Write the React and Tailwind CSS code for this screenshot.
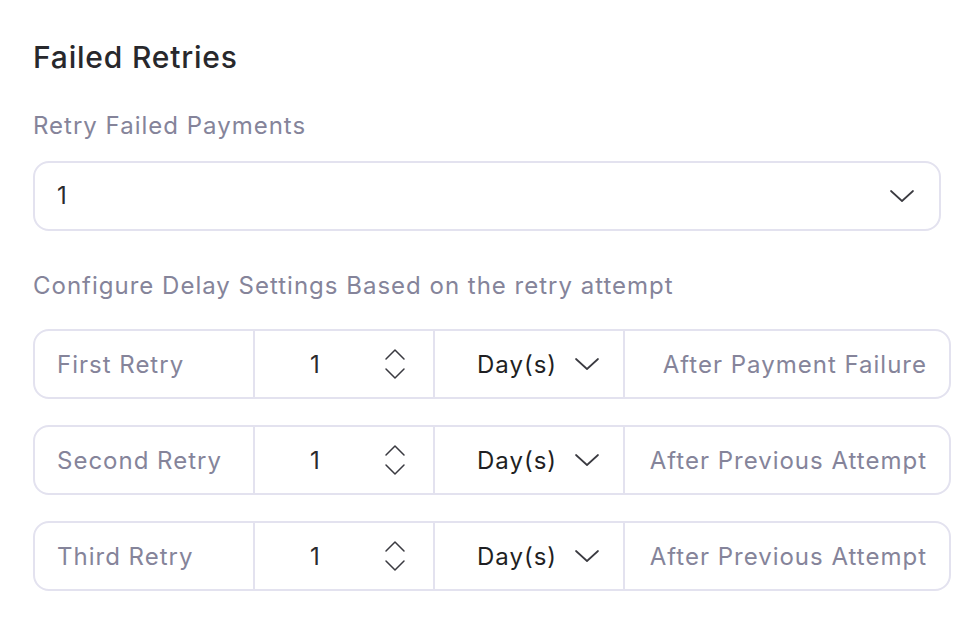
import React from "react";

const ChevronDown = ({ className = "" }) => (
  <svg className={className} width="26" height="16" viewBox="0 0 26 16" fill="none">
    <path d="M2 3l11 10L24 3" stroke="#3a3a40" strokeWidth="1.7" strokeLinecap="round" strokeLinejoin="round" />
  </svg>
);

const Stepper = () => (
  <svg width="24" height="34" viewBox="0 0 24 34" fill="none">
    <path d="M3 12L12 3l9 9" stroke="#3a3a40" strokeWidth="1.5" strokeLinecap="round" strokeLinejoin="round" />
    <path d="M3 22l9 9 9-9" stroke="#3a3a40" strokeWidth="1.5" strokeLinecap="round" strokeLinejoin="round" />
  </svg>
);

const retries = [
  { name: "First Retry", after: "After Payment Failure" },
  { name: "Second Retry", after: "After Previous Attempt" },
  { name: "Third Retry", after: "After Previous Attempt" },
];

const App = () => {
  return (
    <div
      className="w-[974px] h-[624px] bg-white overflow-hidden pl-[33px] pr-[23px] pt-[38px] tracking-[1px]"
      style={{ fontFamily: "Inter, 'Noto Sans', sans-serif" }}
    >
      <h2 className="text-[30px] leading-[38px] font-medium tracking-[0.8px] text-[#28282c]">Failed Retries</h2>

      <p className="mt-[34px] text-[24px] leading-[32px] text-[#85849a]">Retry Failed Payments</p>

      <div className="mt-[19px] mr-[10px] h-[70px] border-2 border-[#e3e2ef] rounded-[16px] flex items-center justify-between pl-[22px] pr-[24px]">
        <span className="text-[24px] text-[#2a2a2e]">1</span>
        <ChevronDown />
      </div>

      <p className="mt-[39px] text-[24px] leading-[32px] text-[#85849a]">
        Configure Delay Settings Based on the retry attempt
      </p>

      <div className="mt-[27px] flex flex-col gap-[26px]">
        {retries.map((r) => (
          <div
            key={r.name}
            className="h-[70px] border-2 border-[#e3e2ef] rounded-[16px] flex items-stretch text-[24px]"
          >
            <div className="w-[220px] flex items-center pl-[22px] pt-[2px] text-[#85849a] border-r-2 border-[#e3e2ef]">
              {r.name}
            </div>
            <div className="w-[180px] flex items-center justify-between pl-[55px] pr-[26px] text-[#2a2a2e] border-r-2 border-[#e3e2ef]">
              <span className="pt-[2px]">1</span>
              <Stepper />
            </div>
            <div className="w-[190px] flex items-center justify-between pl-[42px] pr-[23px] text-[#1f1f23] border-r-2 border-[#e3e2ef]">
              <span className="pt-[2px]">Day(s)</span>
              <ChevronDown />
            </div>
            <div className="flex-1 flex items-center justify-end pr-[22px] pt-[2px] text-[#85849a]">{r.after}</div>
          </div>
        ))}
      </div>
    </div>
  );
};

export default App;
